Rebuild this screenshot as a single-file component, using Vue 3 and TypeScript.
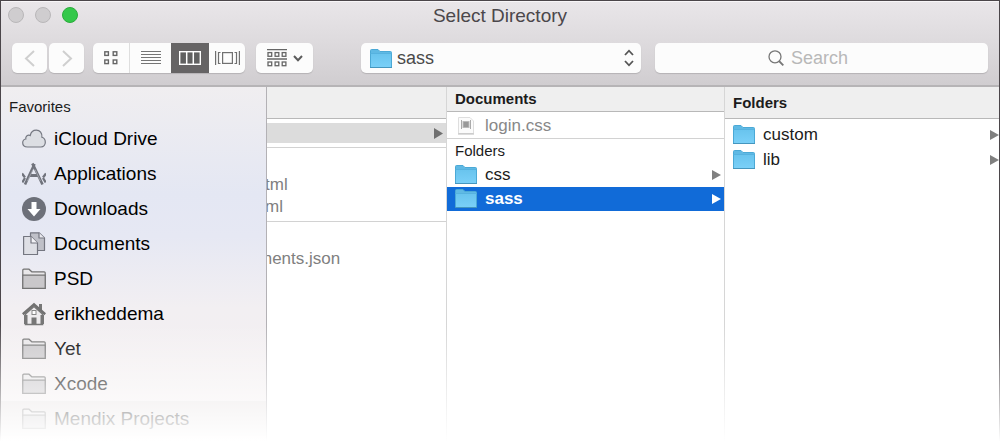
<script setup lang="ts">
import { ref } from 'vue'

type Icon = 'cloud' | 'apps' | 'download' | 'docs' | 'folder' | 'home'
interface Place { name: string; icon: Icon; band?: boolean }

const places: Place[] = [
  { name: 'iCloud Drive', icon: 'cloud' },
  { name: 'Applications', icon: 'apps' },
  { name: 'Downloads', icon: 'download' },
  { name: 'Documents', icon: 'docs' },
  { name: 'PSD', icon: 'folder' },
  { name: 'erikheddema', icon: 'home' },
  { name: 'Yet', icon: 'folder' },
  { name: 'Xcode', icon: 'folder' },
  { name: 'Mendix Projects', icon: 'folder', band: true },
]
const middleFolders = ['css', 'sass']
const lastFolders = ['custom', 'lib']
const selected = ref('sass')
const directory = ref('sass')
const query = ref('')
</script>

<template>
  <main class="window">
    <svg class="defs" aria-hidden="true">
      <defs>
        <linearGradient id="blue" x1="0" y1="0" x2="0" y2="1">
          <stop offset="0" stop-color="#69c4ee" />
          <stop offset="1" stop-color="#7ad0f8" />
        </linearGradient>
        <symbol id="bluefolder" viewBox="0 0 22 20">
          <path d="M.5 18.5V1.500Q.5.5 1.500.5H8L10 2.500H20.500Q21.500 2.500 21.500 3.500V18.500Z" fill="#5fb9e4" stroke="#4ba9d6" />
          <path d="M1 5H21V18.500H1Z" fill="url(#blue)" />
          <path d="M.5 4.500H21.500" stroke="#56b2df" />
          <path d="M0 18.500H22" stroke="#4596be" />
        </symbol>
      </defs>
    </svg>

    <header class="chrome">
      <div class="titlebar">
        <div class="lights">
          <button class="light" aria-label="Close"></button>
          <button class="light" aria-label="Minimize"></button>
          <button class="light green" aria-label="Zoom"></button>
        </div>
        <h1>Select Directory</h1>
      </div>
      <div class="toolbar">
        <div class="nav">
          <button class="tool" aria-label="Back">
            <svg width="12" height="18" viewBox="0 0 12 18"><path d="M10 2 2 9.500 10 17" fill="none" stroke="#cfcfcf" stroke-width="2" /></svg>
          </button>
          <button class="tool" aria-label="Forward">
            <svg width="12" height="18" viewBox="0 0 12 18"><path d="M2 2 10 9.500 2 17" fill="none" stroke="#cfcfcf" stroke-width="2" /></svg>
          </button>
        </div>
        <div class="views">
          <button aria-label="Icons">
            <svg width="14" height="14" viewBox="0 0 14 14" fill="none" stroke="#666" stroke-width="1.400"><rect x=".8" y=".8" width="3.600" height="3.600" /><rect x="9.200" y=".8" width="3.600" height="3.600" /><rect x=".8" y="9" width="3.600" height="3.600" /><rect x="9.200" y="9" width="3.600" height="3.600" /></svg>
          </button>
          <button class="wide" aria-label="List">
            <svg width="20" height="14" viewBox="0 0 20 14"><path d="M0 .5H20M0 3.500H20M0 6.500H20M0 9.500H20M0 12.500H20" stroke="#757575" /></svg>
          </button>
          <button class="active" aria-label="Columns">
            <svg width="22" height="14" viewBox="0 0 22 14"><rect x=".7" y=".7" width="20.600" height="12.600" fill="#606060" stroke="#fff" stroke-width="1.400" /><path d="M7.700 1V13M14.300 1V13" stroke="#fff" stroke-width="1.500" /></svg>
          </button>
          <button aria-label="Cover Flow">
            <svg width="25" height="14" viewBox="0 0 25 14" fill="none" stroke="#707070" stroke-width="1.200"><rect x="7.600" y="1.600" width="9.800" height="10.800" /><path d="M.6 0V14M24.400 0V14M5.500 1.500H3.500V12.500H5.500M19.500 1.500H21.500V12.500H19.500" /></svg>
          </button>
        </div>
        <button class="tool arrange" aria-label="Arrange">
          <svg width="20" height="18" viewBox="0 0 20 18" fill="none" stroke="#666" stroke-width="1.300"><path d="M0 .7H20M0 10H20" /><rect x="1" y="3.600" width="3.700" height="3.700" /><rect x="8.100" y="3.600" width="3.700" height="3.700" /><rect x="15.200" y="3.600" width="3.700" height="3.700" /><rect x="1" y="13" width="3.700" height="3.700" /><rect x="8.100" y="13" width="3.700" height="3.700" /><rect x="15.200" y="13" width="3.700" height="3.700" /></svg>
          <svg width="10" height="7" viewBox="0 0 10 7"><path d="M1 1 5 5.200 9 1" fill="none" stroke="#5c5c5c" stroke-width="2" /></svg>
        </button>
        <div class="directory">
          <svg class="dir-icon" width="22" height="20"><use href="#bluefolder" /></svg>
          <select v-model="directory" aria-label="Directory">
            <option>sass</option>
            <option>css</option>
          </select>
          <svg class="dir-arrows" width="10" height="18" viewBox="0 0 10 18"><path d="M1 6 5 1.700 9 6M1 12 5 16.300 9 12" fill="none" stroke="#555" stroke-width="1.800" /></svg>
        </div>
        <label class="search">
          <svg width="16" height="16" viewBox="0 0 16 16" fill="none" stroke="#777"><circle cx="7" cy="6.800" r="6" stroke-width="1.300" /><path d="M11 11 15.300 15.400" stroke-width="1.800" /></svg>
          <input v-model="query" type="search" placeholder="Search" aria-label="Search" />
        </label>
      </div>
    </header>

    <div class="browser">
      <nav class="sidebar">
        <h2>Favorites</h2>
        <a v-for="p in places" :key="p.name" href="#" class="place" :class="{ band: p.band }">
          <svg width="24" height="24" viewBox="0 0 24 24">
            <path v-if="p.icon === 'cloud'" d="M5.500 20C2.500 20 .7 18.200.7 15.800.7 13.700 2 12.300 3.800 12 3.200 9 6 7.300 8.200 8.500 9 4.800 11.500 3.200 14.300 3.200 18 3.200 20.300 6 19.900 10.300 22.200 11 23.300 13 23.300 15.300 23.300 18 21.500 20 19 20Z" fill="#dcdee3" stroke="#747780" stroke-width="1.200" />
            <g v-else-if="p.icon === 'apps'" fill="none" stroke="#70737c">
              <path d="M12.500 2 3 22.500" stroke-width="2.600" />
              <path d="M10.300 1.500 12 4.500 20.500 22.500" stroke-width="2.600" />
              <path d="M0 11.500 3 15.500M24 11.500 21 15.500M.3 20.500 3 16M23.700 20.500 21 16" stroke-width="2.300" />
              <path d="M7.500 13.500H16.500" stroke-width="3" />
              <path d="M5.500 19 11 7.500M18.500 19 13 7.500" stroke="#c9ccd4" stroke-width=".5" />
            </g>
            <g v-else-if="p.icon === 'download'">
              <circle cx="12" cy="12" r="12" fill="#6d7079" />
              <path d="M9.500 5H14.500V12H18.500L12 19.500 5.500 12H9.500Z" fill="#fff" />
            </g>
            <g v-else-if="p.icon === 'docs'" stroke="#747680" stroke-width="1.200" stroke-linejoin="round">
              <path d="M8.500.8H17L22.500 6V18.500H8.500Z" fill="#bfc0c8" />
              <path d="M17 .8V6H22.500" fill="#e9e9ef" />
              <path d="M1.600 4.500H9L15.500 11V22.500H1.600Z" fill="#dedfe5" />
              <path d="M9 4.500V11H15.500" fill="#f2f2f6" />
            </g>
            <g v-else-if="p.icon === 'folder'" stroke="#737373" stroke-width="1.200">
              <path d="M.8 21.300V3.200Q.8 2.200 1.800 2.200H7L9.800 4.800H22.200Q23.200 4.800 23.200 5.800V21.300Z" fill="#e9e7e9" />
              <path d="M.8 8.200H23.200V21.300H.8Z" fill="#c9c7ca" />
            </g>
            <g v-else>
              <path d="M17 2H20V9H17Z" fill="#777" />
              <path d="M3.500 12 12 4.500 20.500 12V22.500H3.500Z" fill="#eeecee" stroke="#777" stroke-width="1.600" />
              <path d="M.8 12.200 12 2.300 23.200 12.200" fill="none" stroke="#717171" stroke-width="2.500" />
              <path d="M2 13H5.500V22H2ZM18.500 13H22V22H18.500Z" fill="#777" />
              <rect x="10" y="8.500" width="4" height="4" fill="#fff" stroke="#888" />
              <path d="M9.500 23V15.500H14.500V23Z" fill="#777" />
            </g>
          </svg>
          <span>{{ p.name }}</span>
        </a>
      </nav>

      <section class="column first">
        <div class="head"></div>
        <button class="parent" aria-label="Open folder">
          <svg width="9" height="11" viewBox="0 0 9 11"><path d="M0 0 9 5.500 0 11Z" fill="#707070" /></svg>
        </button>
        <ul class="clipped html">
          <li>tml</li>
          <li>ml</li>
        </ul>
        <ul class="clipped json">
          <li>ments.json</li>
        </ul>
      </section>

      <section class="column middle">
        <h2 class="head">Documents</h2>
        <button class="file" disabled>
          <svg width="22" height="18" viewBox="0 0 22 18"><path d="M3.500.5H15L18.500 4V16.500H3.500Z" fill="#fbfbfb" stroke="#dedede" /><path d="M3 17H19" stroke="#bbb" /><path d="M6.500 3V12M15.500 3V12" stroke="#aaa" /><rect x="8" y="4.500" width="6" height="6" fill="#999" stroke="#bbb" /></svg>
          <span>login.css</span>
        </button>
        <h3>Folders</h3>
        <button v-for="f in middleFolders" :key="f" class="folder" :class="{ selected: selected === f }" @click="selected = f">
          <svg width="22" height="20"><use href="#bluefolder" /></svg>
          <span>{{ f }}</span>
          <svg class="arrow" width="9" height="10" viewBox="0 0 9 10"><path d="M0 0 9 5 0 10Z" fill="currentColor" /></svg>
        </button>
      </section>

      <section class="column last">
        <h2 class="head">Folders</h2>
        <button v-for="f in lastFolders" :key="f" class="folder">
          <svg width="22" height="20"><use href="#bluefolder" /></svg>
          <span>{{ f }}</span>
          <svg class="arrow" width="9" height="10" viewBox="0 0 9 10"><path d="M0 0 9 5 0 10Z" fill="currentColor" /></svg>
        </button>
      </section>
    </div>
    <div class="fade"></div>
  </main>
</template>

<style>
body { margin: 0; background: #fff; }
</style>

<style scoped>
* { box-sizing: border-box; }
h1, h2, h3, ul { margin: 0; padding: 0; font-weight: 400; list-style: none; }
button, input, select { font: inherit; color: inherit; border: 0; margin: 0; padding: 0; background: none; }
svg { display: block; flex: none; }

.window {
  position: relative;
  display: flex;
  flex-direction: column;
  min-height: 100vh;
  padding: 1px 1px 0;
  background: #4b464a;
  font-family: "Liberation Sans", Arial, sans-serif;
  color: #1c1c1c;
}
.defs { position: absolute; width: 0; height: 0; }

.chrome {
  background: linear-gradient(#e9e6e9, #dddadd 50%, #d0cdd0);
  border-top: 1px solid #f8f6f8;
  border-bottom: 2px solid #b6b4b6;
}
.titlebar { display: grid; grid-template-columns: 1fr auto 1fr; height: 41px; padding: 0 7px; }
.lights { display: flex; gap: 11px; padding-top: 5px; }
.light { width: 16px; height: 16px; border: 1px solid #b9b7b9; border-radius: 50%; background: #cfcdcf; }
.light.green { background: #34c84a; border-color: #2bac3c; }
h1 { font-size: 19px; line-height: 28px; color: #4b474b; }

.toolbar { display: flex; align-items: center; height: 42px; padding: 0 11px 12px; }
.nav { display: flex; gap: 2px; margin-right: 9px; }
.tool, .views, .directory, .search {
  height: 30px;
  border-radius: 5px;
  background: #fcfcfc;
  box-shadow: 0 1px 1px #b5b2b5;
}
.tool { display: flex; align-items: center; justify-content: center; width: 35px; }
.arrange { width: 57px; gap: 6px; margin: 0 48px 0 11px; }
.views { display: flex; overflow: hidden; }
.views button { display: flex; align-items: center; justify-content: center; width: 36px; }
.views button.wide { width: 42px; border-left: 1px solid #dedede; }
.views button.active { width: 38px; background: #666465; }
.directory { position: relative; flex: 280 1 0; margin-right: 14px; }
.directory select {
  appearance: none;
  width: 100%;
  height: 30px;
  padding-left: 36px;
  font-size: 18px;
  color: #4a4a4a;
}
.dir-icon { position: absolute; left: 9px; top: 6px; pointer-events: none; }
.dir-arrows { position: absolute; right: 7px; top: 6px; pointer-events: none; }
.search { display: flex; align-items: center; gap: 7px; flex: 334 1 0; }
.search svg { margin-left: 34%; }
.search input { flex: 1; min-width: 0; height: 30px; font-size: 18px; outline: 0; appearance: none; }
.search input::placeholder { color: #b8b8b8; opacity: 1; }

.browser { flex: 1; display: grid; grid-template-columns: 266px 180fr 278fr 274fr; background: #fff; }
.sidebar {
  border-right: 1px solid #b3b1b5;
  background: linear-gradient(#f0eef0, #e4e7f3 30%, #e6e8f3 42%, #f2eff2 62%, #f4efef);
}
.sidebar h2 { padding-left: 8px; font-size: 15px; line-height: 20px; padding-top: 10px; margin-bottom: 4px; }
.place {
  display: flex;
  align-items: center;
  gap: 8px;
  height: 35px;
  padding-left: 21px;
  font-size: 19px;
  color: #000;
  text-decoration: none;
  white-space: nowrap;
}
.place.band { background: #e6e1e1; }

.column { min-width: 0; overflow: hidden; }
.first, .middle { border-right: 1px solid #d6d6d6; }
.head {
  height: 32px;
  padding-left: 8px;
  border-bottom: 1px solid #b8b8b8;
  background: #efefef;
  font-size: 15px;
  font-weight: 700;
  line-height: 32px;
}
.middle .head { height: 25px; line-height: 24px; }
.parent {
  display: flex;
  align-items: center;
  justify-content: flex-end;
  width: 100%;
  height: 20px;
  margin: 4px 0;
  padding-right: 3px;
  background: #dcdcdc;
}
.clipped { border-top: 1px solid #d2d2d2; font-size: 17px; line-height: 22px; color: #808080; }
.html { height: 74px; padding-top: 26px; text-indent: -2px; }
.json { padding-top: 26px; text-indent: -9px; }

.file, .folder { display: flex; align-items: center; gap: 8px; width: 100%; padding-left: 8px; font-size: 17px; text-align: left; }
.file { height: 27px; padding-top: 2px; border-bottom: 1px solid #d2d2d2; color: #888; }
h3 { padding-left: 8px; font-size: 15px; line-height: 24px; }
.folder { height: 24px; padding-right: 3px; color: #1c1c1c; }
.arrow { margin-left: auto; color: #808080; }
.folder.selected { background: #116bd8; color: #fff; }
.folder.selected .arrow { color: #fff; }
.folder.selected span { font-weight: 700; }
.last .folder { height: 25px; padding-right: 0; }
.last .head { margin-bottom: 3px; }

.fade {
  position: absolute;
  inset: auto 0 0;
  height: 120px;
  background: linear-gradient(#fff0, #fff 98%);
  pointer-events: none;
}
</style>
